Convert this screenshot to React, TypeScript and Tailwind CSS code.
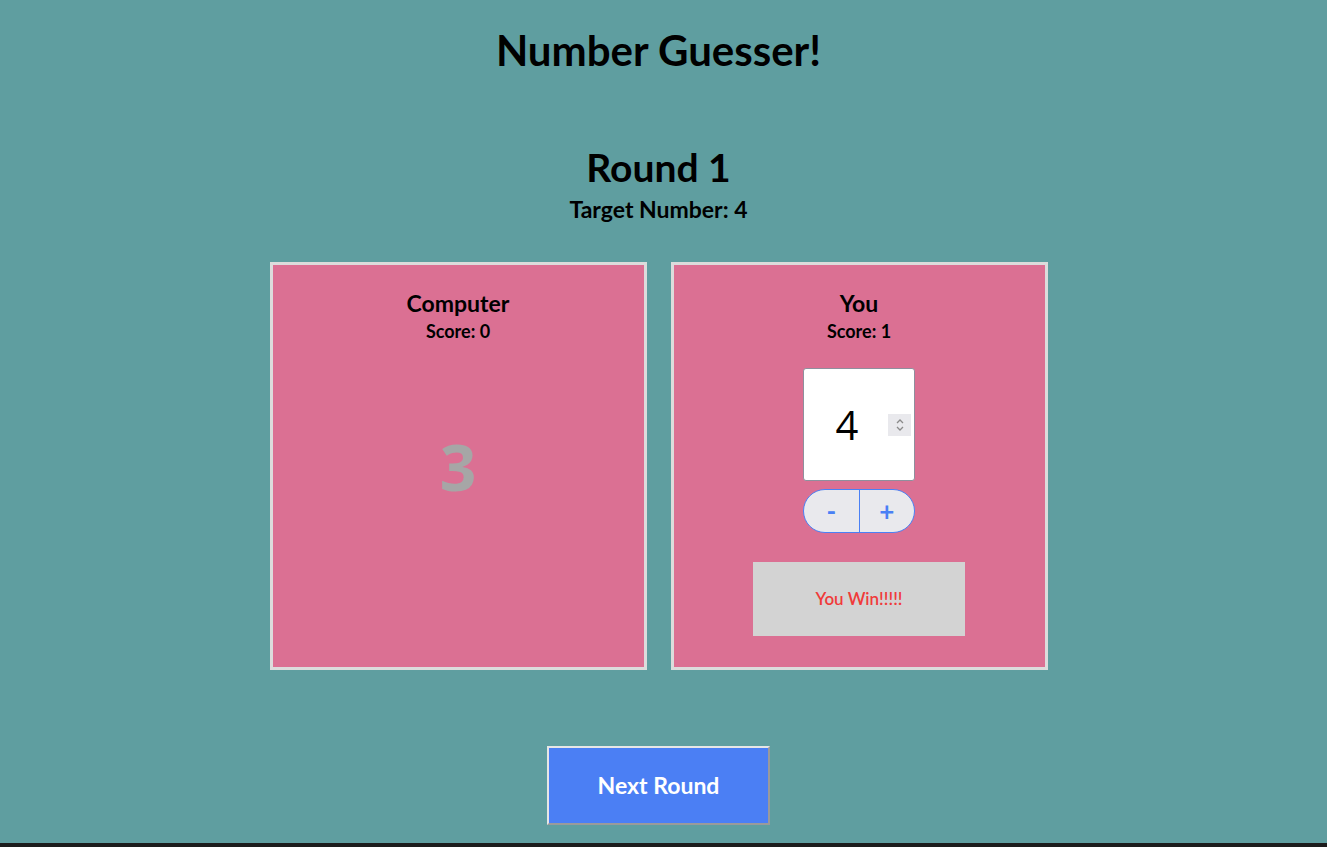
import React, { useState } from 'react';

const font = { fontFamily: 'Lato, "Noto Sans", sans-serif' };

const App = () => {
  const [guess, setGuess] = useState(4);

  return (
    <div className="min-h-[847px] flex flex-col bg-[#1c1c1c]">
      <div
        className="h-[843px] bg-[#5f9ea0] pr-[10px] flex flex-col items-center text-black"
        style={font}
      >
        <h1 className="mt-[26px] text-[42px] leading-[48px] font-bold">Number Guesser!</h1>

        <h2 className="mt-[70px] text-[39px] leading-[46px] font-bold">Round 1</h2>
        <p className="mt-[5px] text-[23px] leading-[28px] font-bold">Target Number: 4</p>

        <div className="mt-[39px] flex gap-[24px]">
          <div className="w-[377px] h-[408px] border-[3px] border-[#dcdcdc] bg-[#db7093] flex flex-col items-center">
            <h3 className="mt-[24px] text-[23px] leading-[28px] font-bold">Computer</h3>
            <p className="mt-[3px] text-[18px] leading-[22px] font-bold">Score: 0</p>
            <div
              className="mt-[89px] text-[64px] leading-[72px] font-bold text-[#a6a6a6]"
              style={{ fontFamily: '"Open Sans", sans-serif' }}
            >
              3
            </div>
          </div>

          <div className="w-[377px] h-[408px] border-[3px] border-[#dcdcdc] bg-[#db7093] flex flex-col items-center">
            <h3 className="mt-[24px] text-[23px] leading-[28px] font-bold">You</h3>
            <p className="mt-[3px] text-[18px] leading-[22px] font-bold">Score: 1</p>

            <div className="mt-[26px] w-[112px] h-[113px] bg-white border border-[#8f8f9d] rounded-[3px] flex items-center">
              <span
                className="flex-1 pl-[2px] text-center text-[40px] leading-none"
                style={{ fontFamily: '"Open Sans", sans-serif' }}
              >
                {guess}
              </span>
              <div className="mr-[3px] w-[23px] h-[22px] bg-[#e9e9ed] flex flex-col items-center justify-center">
                <svg width="10" height="16" viewBox="0 0 10 16" fill="none" stroke="#8a8a8a" strokeWidth="1.3">
                  <path d="M2 6 L5 3 L8 6" />
                  <path d="M2 10 L5 13 L8 10" />
                </svg>
              </div>
            </div>

            <div className="mt-[8px] w-[112px] h-[44px] flex rounded-full border border-[#4a80f5] bg-[#e9e9ed] overflow-hidden">
              <button
                onClick={() => setGuess(guess - 1)}
                className="flex-1 text-[#4a80f5] text-[26px] font-bold leading-none"
              >
                -
              </button>
              <div className="w-px bg-[#4a80f5]" />
              <button
                onClick={() => setGuess(guess + 1)}
                className="flex-1 text-[#4a80f5] text-[26px] font-bold leading-none"
              >
                +
              </button>
            </div>

            <div className="mt-[29px] w-[212px] h-[74px] bg-[#d3d3d3] flex items-center justify-center text-[17px] font-semibold text-[#f03a3a]">
              You Win!!!!!
            </div>
          </div>
        </div>

        <button
          className="mt-[76px] w-[223px] h-[79px] bg-[#4b7ff4] text-white text-[23px] font-bold border-2 border-t-[#e6e6e6] border-l-[#e6e6e6] border-b-[#9a9a9a] border-r-[#9a9a9a]"
          style={font}
        >
          Next Round
        </button>
      </div>
      <div className="flex-1 bg-[#1c1c1c]" />
    </div>
  );
};

export default App;
